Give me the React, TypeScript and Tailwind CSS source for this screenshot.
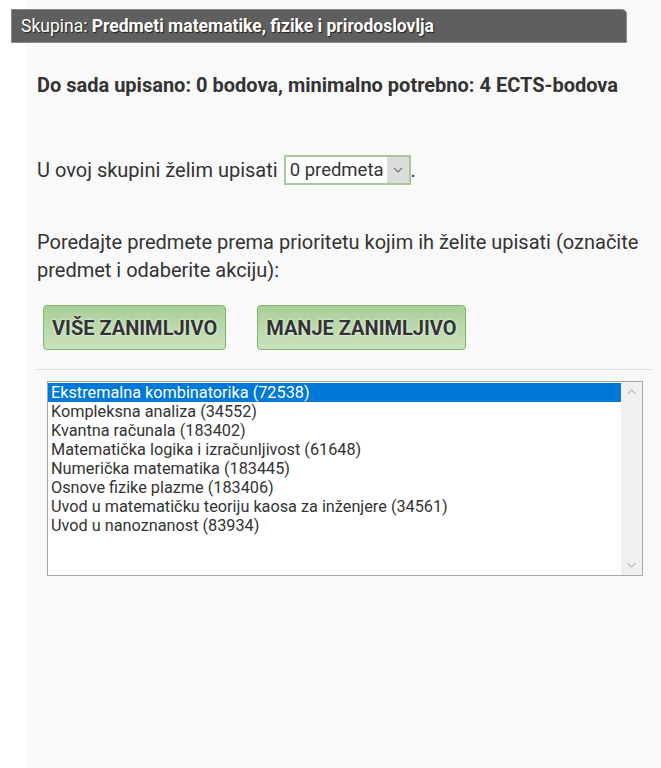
import React from 'react';

const courses = [
  'Ekstremalna kombinatorika (72538)',
  'Kompleksna analiza (34552)',
  'Kvantna računala (183402)',
  'Matematička logika i izračunljivost (61648)',
  'Numerička matematika (183445)',
  'Osnove fizike plazme (183406)',
  'Uvod u matematičku teoriju kaosa za inženjere (34561)',
  'Uvod u nanoznanost (83934)',
];

function PriorityButton({ label }: { label: string }) {
  return (
    <button
      type="button"
      className="h-[45px] rounded-[4px] border border-[#7fb56c] bg-gradient-to-b from-[#a9cf99] to-[#c9e2bd] px-[8px] text-[20px] font-bold uppercase text-[#333] [text-shadow:0_0_3px_#ffffff]"
    >
      {label}
    </button>
  );
}

export default function App() {
  return (
    <div className="relative min-h-[768px] bg-white font-['Roboto',sans-serif] text-[#333]">
      <div className="ml-[26px] min-h-[768px] bg-[#f9f9f9] pt-[73px]">
        <div className="px-[11px]">
          <p className="text-[20px] font-bold leading-[24px]">
            Do sada upisano: 0 bodova, minimalno potrebno: 4 ECTS-bodova
          </p>

          <div className="mt-[58px] flex items-center text-[20px] leading-[28px]">
            <span>U ovoj skupini želim upisati</span>
            <div className="ml-[6px] flex h-[30px] items-center border-2 border-[#a9c99b] bg-white pl-[4px]">
              <span className="text-[18.5px]">0 predmeta</span>
              <span className="ml-[3px] flex h-full w-[22px] items-center justify-center bg-[#dcdcdc]">
                <svg width="10" height="6" viewBox="0 0 10 6">
                  <path d="M1 1l4 4 4-4" fill="none" stroke="#777" strokeWidth="1.2" />
                </svg>
              </span>
            </div>
            <span>.</span>
          </div>

          <p className="mt-[43px] text-[20px] leading-[28px]">
            Poredajte predmete prema prioritetu kojim ih želite upisati (označite predmet i odaberite akciju):
          </p>

          <div className="mt-[21px] flex gap-[31px] pl-[6px]">
            <PriorityButton label="Više zanimljivo" />
            <PriorityButton label="Manje zanimljivo" />
          </div>
        </div>

        <div className="mx-[11px] mt-[19px] mr-[9px] border-t border-[#dddddd]" />

        <div className="ml-[21px] mt-[11px] flex h-[195px] w-[596px] border border-[#a6a6a6] bg-white">
          <ul className="flex-1 pt-px text-[16.25px] leading-[19px] text-[#333]">
            {courses.map((c, i) => (
              <li
                key={c}
                className={
                  i === 0
                    ? 'bg-[#0078d7] pl-[3px] text-white'
                    : 'pl-[3px]'
                }
              >
                {c}
              </li>
            ))}
          </ul>
          <div className="flex w-[21px] flex-col justify-between bg-[#f0f0f0] py-[6px]">
            <svg width="21" height="8" viewBox="0 0 21 8">
              <path d="M6.5 6l4-4 4 4" fill="none" stroke="#c2c2c2" strokeWidth="1.3" />
            </svg>
            <svg width="21" height="8" viewBox="0 0 21 8">
              <path d="M6.5 2l4 4 4-4" fill="none" stroke="#c2c2c2" strokeWidth="1.3" />
            </svg>
          </div>
        </div>
      </div>

      <div className="absolute left-[11px] top-[9px] flex h-[34px] w-[616px] items-center rounded-tr-[5px] border border-[#8a8a8a] bg-[#5f5f5f] pl-[9px] text-[17.5px] text-white [text-shadow:1px_1px_1px_#222]">
        <span>Skupina:&nbsp;</span>
        <span className="font-bold">Predmeti matematike, fizike i prirodoslovlja</span>
      </div>
    </div>
  );
}
